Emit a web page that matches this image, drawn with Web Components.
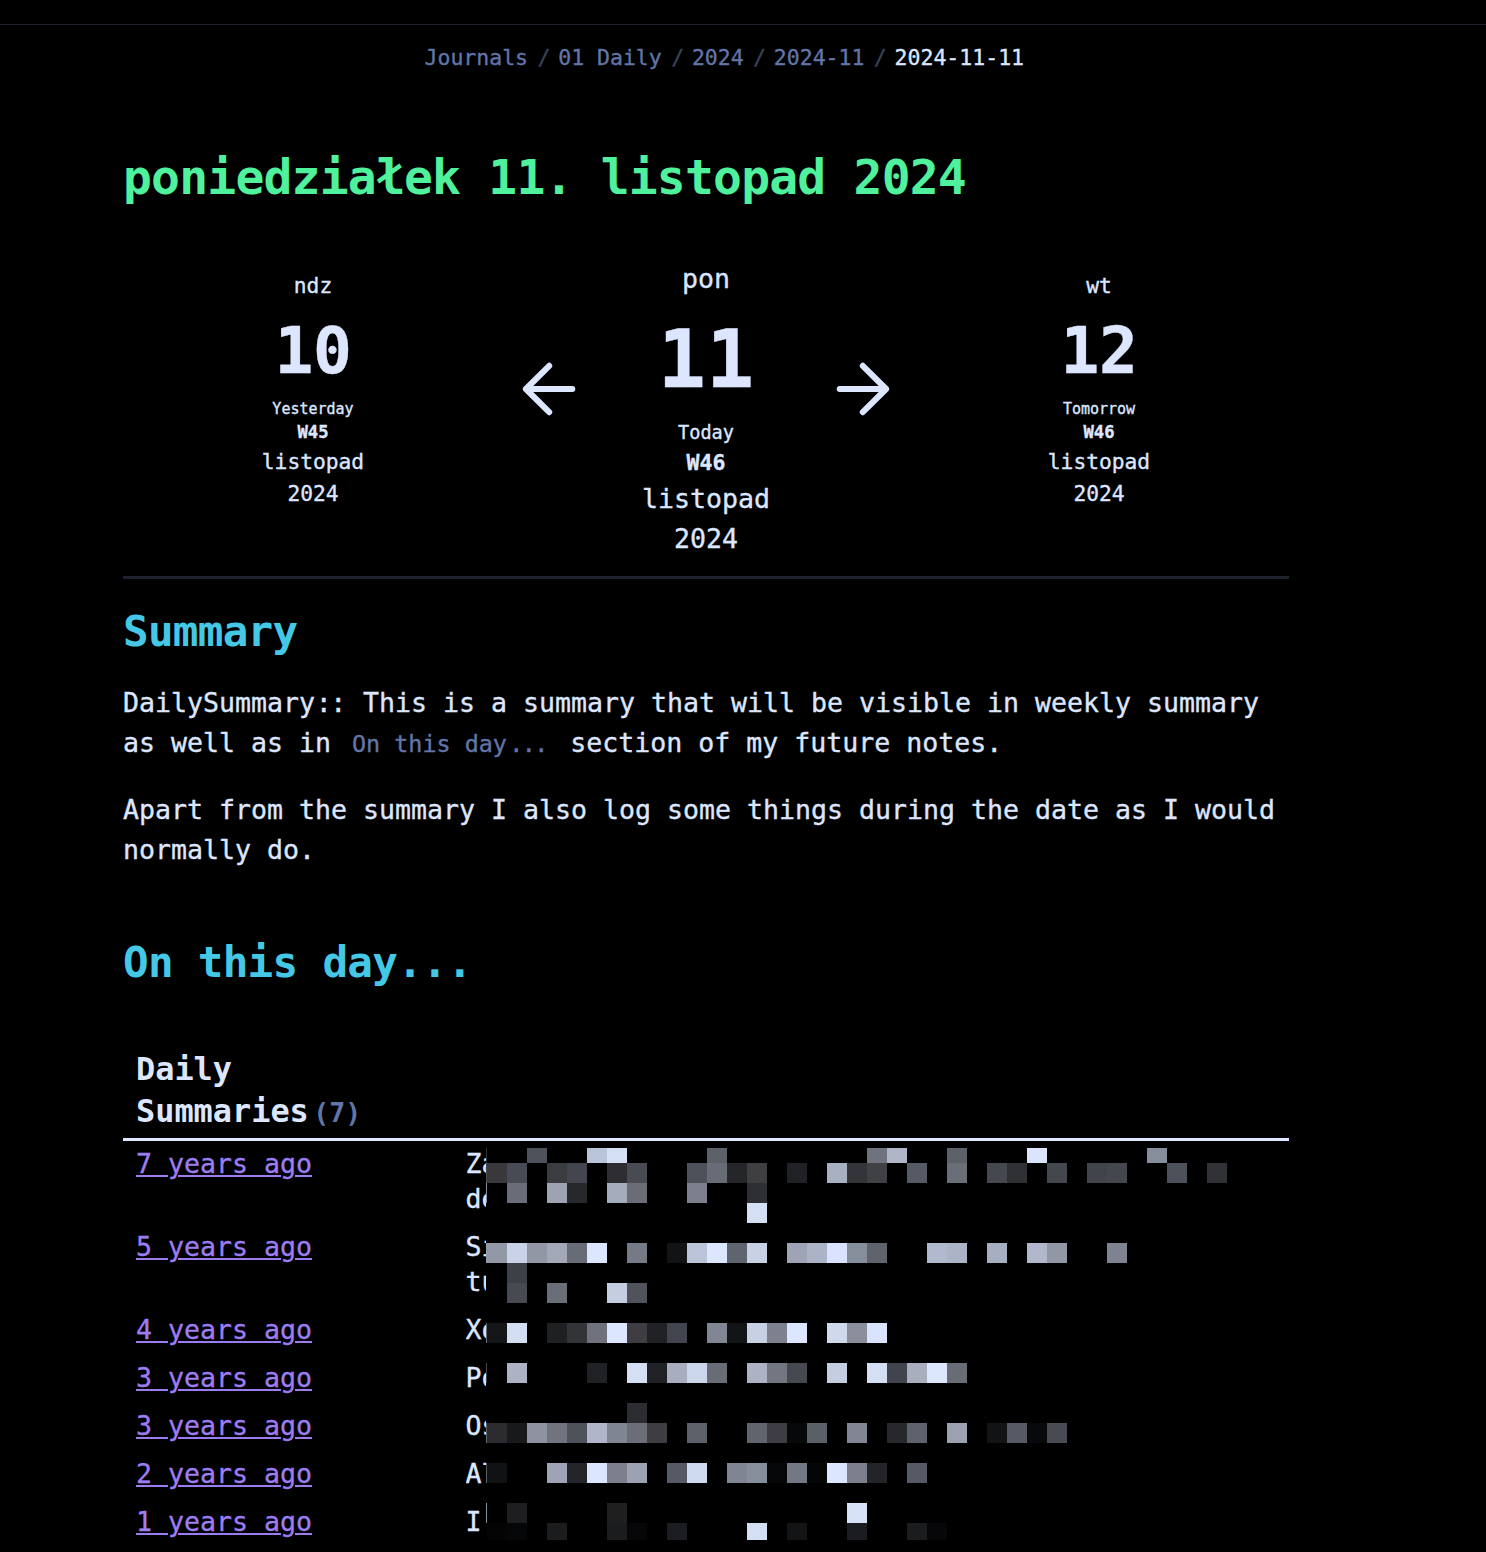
<!DOCTYPE html>
<html lang="pl">
<head>
<meta charset="utf-8">
<title>2024-11-11</title>
<style>
html, body { margin: 0; background: #000; }
body { height: 1552px; overflow: hidden; color: #dde6ff; font: 26.58px/40px "DejaVu Sans Mono", monospace; font-variant-ligatures: none; -webkit-text-stroke: .35px currentColor; }
</style>
</head>
<body>
<journal-page>
  <crumb-trail slot="top" items="Journals|01 Daily|2024|2024-11|2024-11-11"></crumb-trail>
  <note-title>poniedziałek 11. listopad 2024</note-title>
  <day-nav>
    <day-card weekday="ndz" day="10" label="Yesterday" week="W45" month="listopad" year="2024"></day-card>
    <nav-arrow></nav-arrow>
    <day-card current weekday="pon" day="11" label="Today" week="W46" month="listopad" year="2024"></day-card>
    <nav-arrow forward></nav-arrow>
    <day-card weekday="wt" day="12" label="Tomorrow" week="W46" month="listopad" year="2024"></day-card>
  </day-nav>
  <note-heading>Summary</note-heading>
  <note-text>
    <text-line>DailySummary<tight-marks>::</tight-marks> This is a summary that will be visible in weekly summary</text-line>
    <text-line><span>as well as in </span><code-chip>On this day<tight-dots>...</tight-dots></code-chip><span> section of my future notes.</span></text-line>
  </note-text>
  <note-text style="margin-top:27px">Apart from the summary I also log some things during the date as I would normally do.</note-text>
  <note-heading style="margin-top:67.1px">On this day...</note-heading>
  <summary-table count="7">
    <summary-row age="7 years ago"><span>Za</span><span>de</span></summary-row>
    <summary-row age="5 years ago"><span>Si</span><span>tu</span></summary-row>
    <summary-row age="4 years ago"><span>Xo</span></summary-row>
    <summary-row age="3 years ago"><span>Po</span></summary-row>
    <summary-row age="3 years ago"><span>Os</span></summary-row>
    <summary-row age="2 years ago"><span>Al</span></summary-row>
    <summary-row age="1 years ago"><span>I</span></summary-row>
  </summary-table>
</journal-page>
<script>
class Base extends HTMLElement {
  constructor() { super(); this.attachShadow({ mode: 'open' }); }
  connectedCallback() { this.shadowRoot.innerHTML = this.view(); }
}
customElements.define('journal-page', class extends Base {
  view() { return `<style>
    :host { display: block; }
    header { box-sizing: border-box; height: 25px; border-bottom: 1px solid #1e2030; }
    main { width: 1166px; margin-left: 123px; }
  </style><header></header><slot name="top"></slot><main><slot></slot></main>`; }
});
customElements.define('crumb-trail', class extends Base {
  view() {
    const items = this.getAttribute('items').split('|');
    return `<style>
    :host { display: flex; padding: 17.6px 0 0 424.5px; font-size: 21.5px; line-height: 30px; color: #6275a8; }
    span { white-space: pre; }
    i { font-style: normal; color: #3b425a; margin: 0 7.8px 0 9.4px; }
    .last { color: #dde6ff; }
    </style>` + items.map((t, n) => `<span class="${n === items.length - 1 ? 'last' : ''}">${t}</span>`).join('<i>/</i>');
  }
});
customElements.define('note-title', class extends Base {
  view() { return `<style>:host { display: block; margin-top: 74.4px; font-size: 48px; letter-spacing: -.8px; line-height: 60px; font-weight: 700; color: #50f19c; white-space: nowrap; -webkit-text-stroke: 0; }</style><slot></slot>`; }
});
customElements.define('day-nav', class extends Base {
  view() { return `<style>
    :host { box-sizing: border-box; display: grid; grid-template-columns: 380px 92px 222px 92px 380px; height: 320.2px; margin-top: 51.8px; border-bottom: 3px solid #1e222e; }
  </style><slot></slot>`; }
});
customElements.define('day-card', class extends Base {
  view() {
    const a = n => this.getAttribute(n);
    return `<style>
    :host { display: block; text-align: center; padding-top: 11.4px; font-size: 21.26px; line-height: 32px; }
    .day { font-size: 64.6px; line-height: 80px; margin-top: 8.7px; font-weight: 700; letter-spacing: -.4px; }
    .label { font-size: 15px; line-height: 24px; margin-top: 6.4px; }
    .week { font-size: 17.2px; line-height: 23px; font-weight: 700; margin-bottom: 1.8px; }
    :host([current]) { padding-top: 0; font-size: 26.58px; line-height: 40px; }
    :host([current]) .day { font-size: 80px; line-height: 96px; margin-top: 13.4px; letter-spacing: 0; }
    :host([current]) .label { font-size: 18.6px; line-height: 28px; margin-top: 10.6px; }
    :host([current]) .week { font-size: 21.5px; line-height: 30px; margin: 1.2px 0 1.3px; }
    </style><div>${a('weekday')}</div><div class="day">${a('day')}</div><div class="label">${a('label')}</div><div class="week">${a('week')}</div><div>${a('month')}</div><div>${a('year')}</div>`;
  }
});
customElements.define('nav-arrow', class extends Base {
  view() { return `<style>
    :host { display: flex; justify-content: center; padding-top: 98.2px; }
    :host([forward]) svg { transform: scaleX(-1); }
    svg { display: block; width: 64px; height: 64px; }
  </style><svg viewBox="0 0 64 64" fill="none" stroke="#dde6ff" stroke-width="6" stroke-linecap="round" stroke-linejoin="round"><path d="M32.2 8.8 8.9 32l23.3 23.2M8.9 32h46.4"/></svg>`; }
});
customElements.define('note-heading', class extends Base {
  view() { return `<style>:host { display: block; margin-top: 27.2px; font-size: 42.6px; letter-spacing: -.72px; line-height: 50px; font-weight: 700; color: #45c8e5; -webkit-text-stroke: 0; }</style><slot></slot>`; }
});
customElements.define('note-text', class extends Base {
  view() { return `<style>:host { display: block; margin-top: 27px; } </style><slot></slot>`; }
});
customElements.define('text-line', class extends Base {
  view() { return `<style>:host { display: block; height: 40px; white-space: pre; } </style><slot></slot>`; }
});
customElements.define('tight-marks', class extends Base {
  view() { return `<style>:host { letter-spacing: -1.4px; margin: 0 2.1px 0 .7px; }</style><slot></slot>`; }
});
customElements.define('tight-dots', class extends Base {
  view() { return `<style>:host { letter-spacing: -1.6px; margin: 0 2.4px; }</style><slot></slot>`; }
});
customElements.define('code-chip', class extends Base {
  view() { return `<style>:host { display: inline; padding: 0 5px; font-size: 23.4px; line-height: 1; color: #6275a8; }</style><slot></slot>`; }
});
customElements.define('summary-row', class extends Base {
  view() { return `<style>
    :host { display: grid; grid-template-columns: 329.5px 20.5px; padding: 5.3px 13px 7.7px; line-height: 35px; }
    a { color: #9d7cf0; text-decoration: underline; text-decoration-thickness: 2px; text-underline-offset: 2px; }
    div { display: flex; flex-direction: column; overflow: hidden; }
  </style><a>${this.getAttribute('age')}</a><div><slot></slot></div>`; }
});

// Mosaic bands: y, height, then "column colour" pairs on a 20px grid.
const BANDS = [
  [1148, 15, '2 4e525b 5 bac4d9 6 d6e0f5 11 5c6069 19 6f737e 20 afb6c7 23 5c6069 27 dae4fd 33 868e9c'],
  [1163, 20, '0 39393c 1 484b53 3 3a3c40 4 43464e 6 2e2e32 7 484b52 10 4e515a 11 686c77 12 25262a 13 3f3f42 15 202124 17 a9b0c2 18 343539 19 404144 21 565a65 23 6a6e79 25 45484f 26 303134 28 44474e 30 41444b 31 44474e 34 4d525a 36 303236'],
  [1183, 20, '1 6a6d77 3 9da3b3 4 27282b 6 a5acbc 7 6a6d78 10 7d808c 13 2e2f32'],
  [1203, 20, '13 d4dff3'],
  [1243, 20, '0 9298a6 1 cad2e7 2 9297a5 3 a2a8b8 4 686c77 5 dce7ff 7 747a86 9 121315 10 bac3d8 11 dce7ff 12 60646e 13 c9d1e5 15 9ea3b5 16 adb3c7 17 dae2ff 18 868e9b 19 5f636c 22 b2b8cd 23 adb3c7 25 a7aec2 27 b2b8cc 28 9197a5 31 7d8391'],
  [1263, 20, '1 3e4048'],
  [1283, 20, '1 474a50 3 6a6e78 6 c5cde1 7 50535b'],
  [1323, 20, '0 151617 1 d4def3 3 1f2022 4 323437 5 6f727c 6 dce7ff 7 3e3e42 8 202124 9 42454d 11 808693 12 121415 13 c8d0e4 14 7c818d 15 dce7ff 17 d0d8ec 18 8b8f9c 19 d9e3fc'],
  [1363, 20, '1 adb2c4 5 202124 7 d4dff3 8 1f2124 9 a8adc0 10 cbd6eb 11 686c77 13 adb2c5 14 727782 15 464950 17 c5cee0 19 d4dff3 20 41444c 21 a8aebe 22 dce7fd 23 686c77'],
  [1403, 20, '7 2c2d31'],
  [1423, 20, '0 2c2c30 1 18191b 2 8d93a1 3 71747f 4 4e5259 5 b0b5c9 6 7f8591 7 6b6e79 8 3e3e42 10 5c6069 13 60646d 14 3e3e42 15 070809 16 5a5f68 18 808694 20 27282b 21 5e626c 23 9da2b3 25 121315 26 575a65 27 08090a 28 484b54'],
  [1463, 20, '0 111214 3 9ea3b5 4 242529 5 dce7ff 6 7d808c 7 9ca2b1 9 565a64 10 cfdaef 12 7f8592 13 868d9b 14 040607 15 747884 16 040605 17 dce7ff 18 7c808c 19 232427 21 565a64'],
  [1503, 20, '1 1e1e20 6 1f1f20 18 d8e2f6'],
  [1523, 17, '0 040404 1 040607 3 1b1c1e 6 1b1c1e 7 060608 9 1c1d21 13 d4dff3 15 131416 18 1b1c20 21 1b1c1d 22 070709']
];
const EDGE = [[1148, 15, '303136'], [1163, 20, '4a4c52'], [1183, 20, '8b90a0'], [1243, 20, '9298a6'], [1323, 20, '6a6d77'], [1363, 20, '44474e'], [1423, 20, '60646d'], [1463, 20, '5a5d66'], [1503, 20, '868d9b']];
customElements.define('pixel-mosaic', class extends Base {
  view() {
    const r = (x, y, w, h, c) => `<rect x="${x}" y="${y - 1148}" width="${w}" height="${h}" fill="#${c}"/>`;
    let s = '';
    for (const [y, h, row] of BANDS) {
      const p = row.split(' ');
      for (let i = 0; i < p.length; i += 2) s += r(1 + 20 * p[i], y, 20, h, p[i + 1]);
    }
    for (const [y, h, c] of EDGE) s += r(0, y, 1, h, c);
    return `<style>:host { display: block; } svg { display: block; }</style><svg width="760" height="392" shape-rendering="crispEdges">${s}</svg>`;
  }
});
customElements.define('summary-table', class extends Base {
  view() { return `<style>
    :host { display: block; position: relative; margin-top: 60.6px; }
    .head { box-sizing: border-box; height: 93px; padding: 0 13px; border-bottom: 3px solid #dde6ff; font-size: 31.9px; line-height: 42px; font-weight: 700; -webkit-text-stroke: 0; }
    .head div { display: flex; align-items: baseline; height: 42px; }
    small { font-size: 26.5px; line-height: 30px; color: #6275a8; margin-left: 4.5px; }
    pixel-mosaic { position: absolute; left: 363px; top: 100px; }
  </style><div class="head"><div>Daily</div><div>Summaries<small>(${this.getAttribute('count')})</small></div></div><slot></slot><pixel-mosaic></pixel-mosaic>`; }
});
// Source indentation inside a paragraph is not part of its text lines.
document.querySelectorAll('note-text').forEach(p => [...p.childNodes].forEach(n => {
  if (n.nodeType === 3 && !n.data.trim()) n.remove();
}));
</script>
</body>
</html>
